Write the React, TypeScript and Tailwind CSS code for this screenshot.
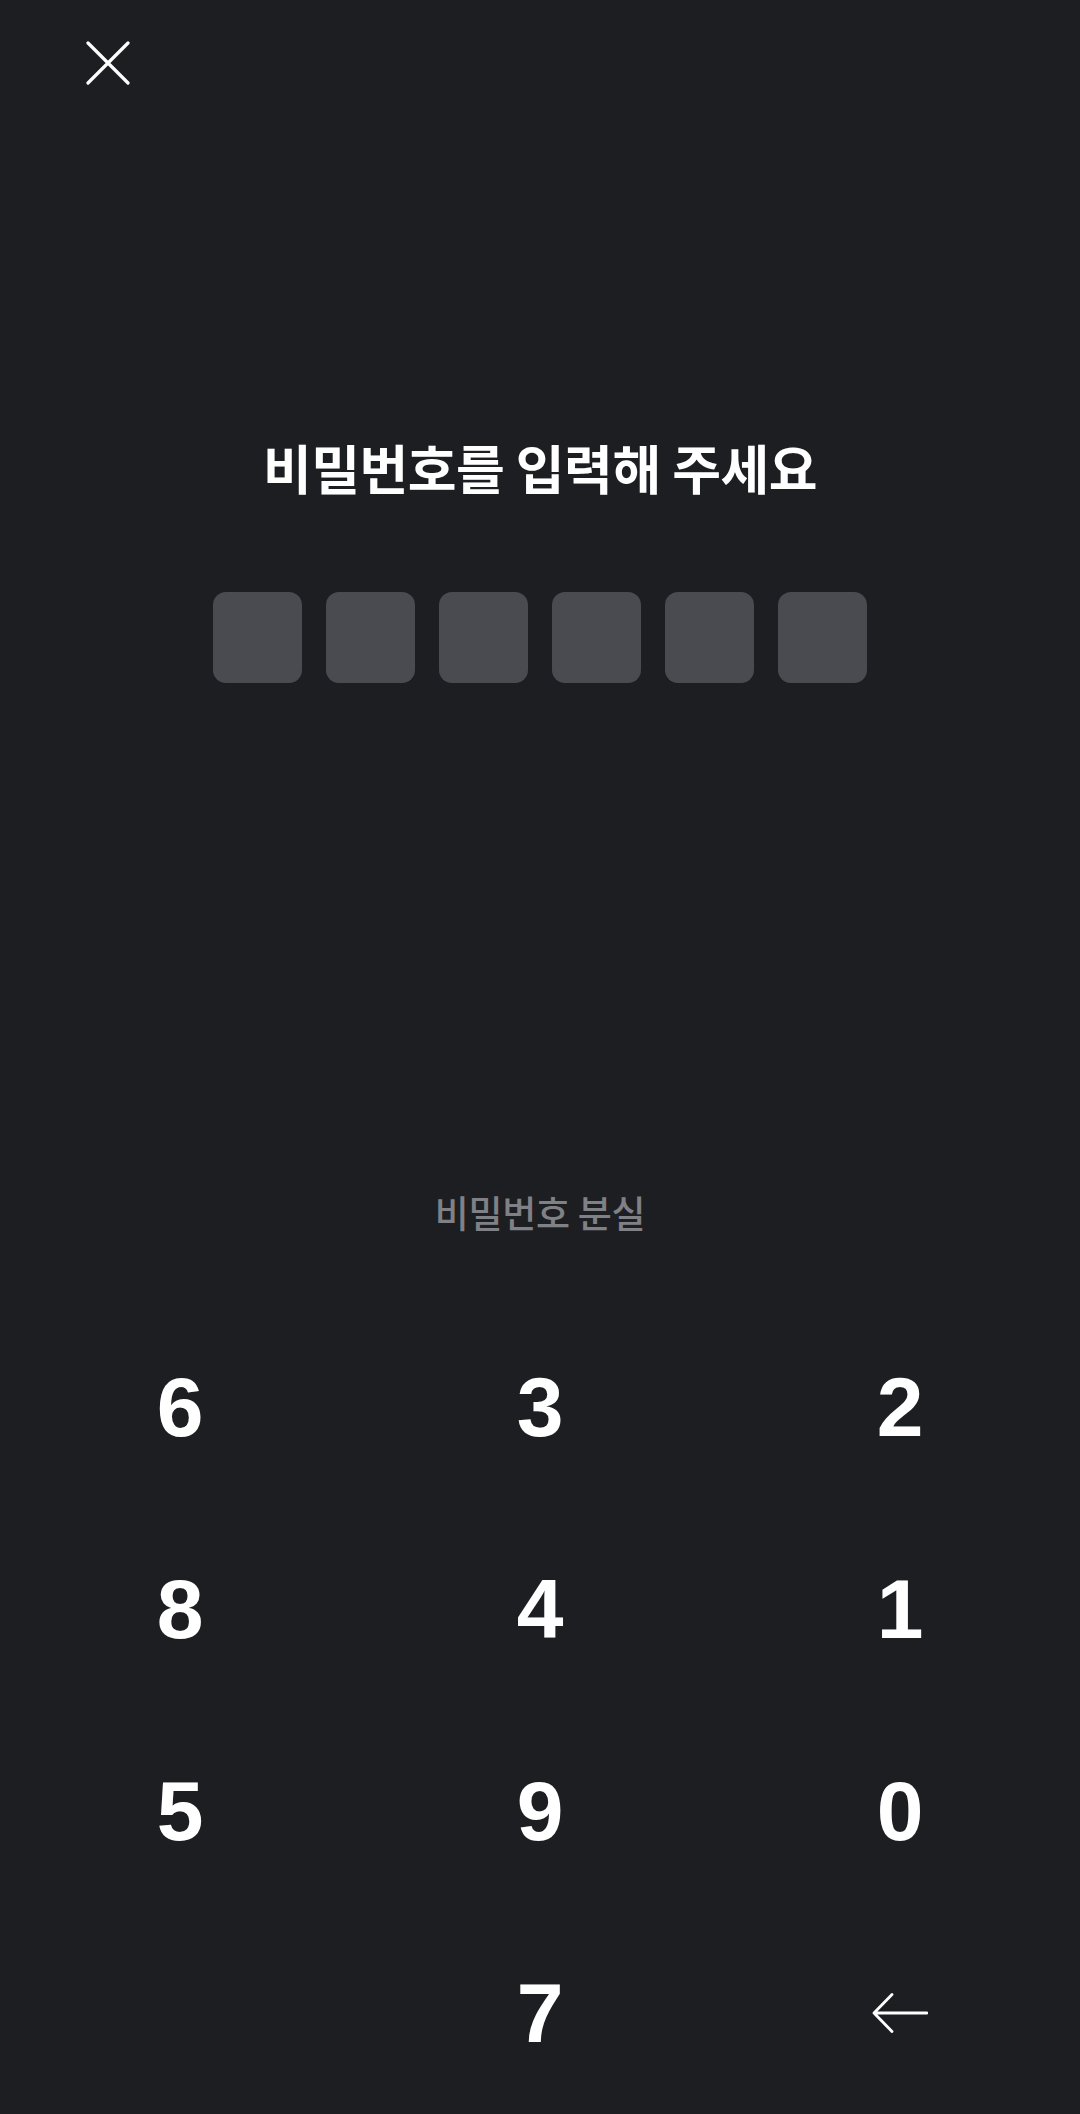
import React from "react";

const digits = ["6", "3", "2", "8", "4", "1", "5", "9", "0"];

export default function App() {
  return (
    <div className="w-[1080px] h-[2114px] bg-[#1d1e22] flex flex-col overflow-hidden" style={{ fontFamily: '"Noto Sans CJK KR", "Noto Sans", sans-serif' }}>
      <div className="h-[126px] flex items-start">
        <button className="ml-[86px] mt-[41px] w-[44px] h-[44px] flex items-center justify-center">
          <svg width="44" height="44" viewBox="0 0 44 44" fill="none">
            <path d="M2 2 L42 42 M42 2 L2 42" stroke="#ffffff" strokeWidth="3.2" strokeLinecap="round" />
          </svg>
        </button>
      </div>
      <div className="mt-[302px] h-[80px] flex items-center justify-center">
        <h1 className="text-[53px] font-bold leading-none text-white tracking-[-0.5px]">비밀번호를 입력해 주세요</h1>
      </div>
      <div className="mt-[85px] flex justify-center gap-[24px]">
        {[0, 1, 2, 3, 4, 5].map((i) => (
          <div key={i} className="w-[89px] h-[91px] rounded-[13px] bg-[#4a4b50]" />
        ))}
      </div>
      <div className="mt-[499px] h-[60px] flex items-center justify-center">
        <span className="text-[37px] font-medium leading-none text-[#808186] tracking-[-0.3px]">비밀번호 분실</span>
      </div>
      <div className="mt-[64px] grid grid-cols-3">
        {digits.map((d) => (
          <div key={d} className="h-[202px] flex items-center justify-center">
            <span className="text-[84px] font-bold leading-none text-white" style={{ fontFamily: '"Liberation Sans", Arial, sans-serif' }}>{d}</span>
          </div>
        ))}
        <div className="h-[202px]" />
        <div className="h-[202px] flex items-center justify-center">
          <span className="text-[84px] font-bold leading-none text-white" style={{ fontFamily: '"Liberation Sans", Arial, sans-serif' }}>7</span>
        </div>
        <div className="h-[202px] flex items-center justify-center">
          <svg width="56" height="40" viewBox="0 0 56 40" fill="none">
            <path d="M2 20 H55 M20 1.5 L2 20 L20 38.5" stroke="#ffffff" strokeWidth="2.8" strokeLinecap="round" strokeLinejoin="round" />
          </svg>
        </div>
      </div>
    </div>
  );
}
